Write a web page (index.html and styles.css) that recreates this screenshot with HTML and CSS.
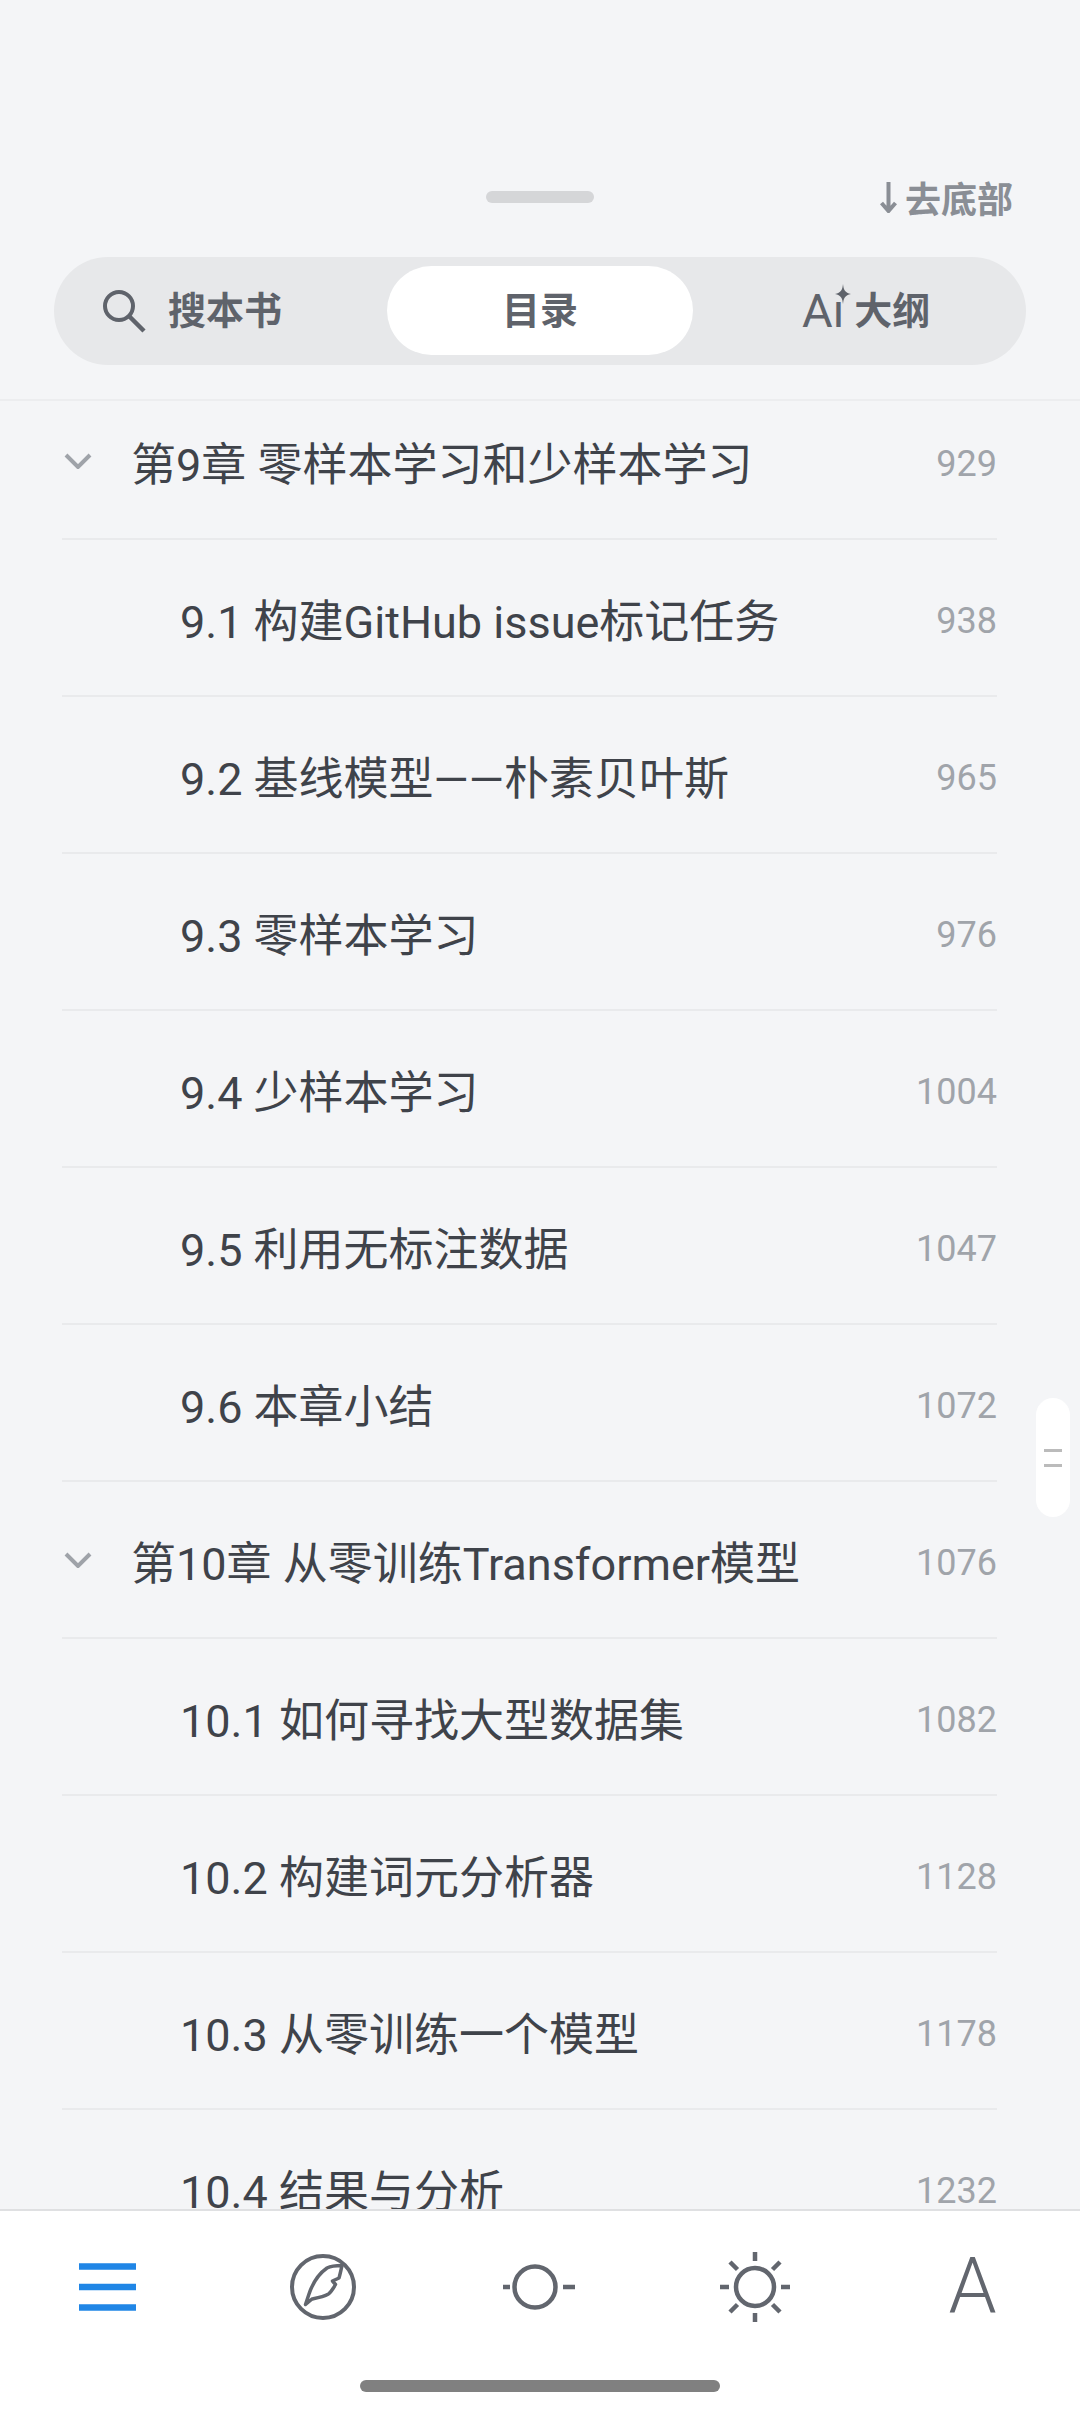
FILE: index.html
```html
<!DOCTYPE html>
<html lang="zh-CN">
  <head>
    <meta charset="UTF-8" />
    <meta name="viewport" content="width=device-width, initial-scale=1.0" />
    <title>目录</title>
    <link rel="stylesheet" href="styles.css">
  </head>
  <body>
    <div class="sheet">
      <div class="head">
        <div class="top_row">
          <span></span>
          <span class="grip"></span>
          <a class="to_bottom">
            <svg class="down_icon" width="17" height="32" viewBox="0 0 17 32"><path d="M8.500 1v29M1.500 22l7 8 7-8" fill="none" stroke="#8a8e95" stroke-width="4"/></svg>
            <span>去底部</span>
          </a>
        </div>
        <div class="tabs">
          <div class="tab tab_search">
            <svg width="44" height="44" viewBox="0 0 44 44"><circle cx="17" cy="17" r="14" fill="none" stroke="#5f636b" stroke-width="4"/><path d="M27 27l15 15" stroke="#5f636b" stroke-width="4.500"/></svg>
            <span class="tab_text">搜本书</span>
          </div>
          <div class="tab tab_active"><span class="tab_text">目录</span></div>
          <div class="tab tab_outline">
            <span class="ai_mark">Aı<svg class="spark" width="16" height="20" viewBox="0 0 16 20"><path d="M8 0c.6 6 2 8.500 8 10-6 1.500-7.400 4-8 10-.6-6-2-8.500-8-10 6-1.500 7.400-4 8-10z" fill="#5f636b"/></svg></span>
            <span class="tab_text">大纲</span>
          </div>
        </div>
      </div>

      <div class="list">
        <div class="list_inner">
          <div class="row chapter">
            <svg class="chevron" width="28" height="16" viewBox="0 0 28 16"><path d="M2 2l12 12L26 2" fill="none" stroke="#9fa3a9" stroke-width="4"/></svg>
            <span class="title">第9章 零样本学习和少样本学习</span><span class="page">929</span>
          </div>
          <div class="row section"><span class="title">9.1 构建GitHub issue标记任务</span><span class="page">938</span></div>
          <div class="row section"><span class="title">9.2 基线模型——朴素贝叶斯</span><span class="page">965</span></div>
          <div class="row section"><span class="title">9.3 零样本学习</span><span class="page">976</span></div>
          <div class="row section"><span class="title">9.4 少样本学习</span><span class="page">1004</span></div>
          <div class="row section"><span class="title">9.5 利用无标注数据</span><span class="page">1047</span></div>
          <div class="row section"><span class="title">9.6 本章小结</span><span class="page">1072</span></div>
          <div class="row chapter">
            <svg class="chevron" width="28" height="16" viewBox="0 0 28 16"><path d="M2 2l12 12L26 2" fill="none" stroke="#9fa3a9" stroke-width="4"/></svg>
            <span class="title">第10章 从零训练Transformer模型</span><span class="page">1076</span>
          </div>
          <div class="row section"><span class="title">10.1 如何寻找大型数据集</span><span class="page">1082</span></div>
          <div class="row section"><span class="title">10.2 构建词元分析器</span><span class="page">1128</span></div>
          <div class="row section"><span class="title">10.3 从零训练一个模型</span><span class="page">1178</span></div>
          <div class="row section"><span class="title">10.4 结果与分析</span><span class="page">1232</span></div>
        </div>
      </div>

      <div class="toolbar">
        <div class="tools">
          <div class="tool">
            <svg width="57" height="48" viewBox="0 0 57 48"><path d="M0 3.500h57M0 24h57M0 44.500h57" stroke="#2086e6" stroke-width="6.500"/></svg>
          </div>
          <div class="tool">
            <svg width="68" height="68" viewBox="0 0 68 68"><circle cx="34" cy="34" r="31" fill="none" stroke="#62666e" stroke-width="4"/><path d="M16.500 51.500L20 41C23 32 28 22 38 15C43 12.500 48 12.500 53 12.500C52 17 51 22 50 25L43.500 28L46.500 31.500C44 36 42 39 39.500 41C34 44 28 45 23 46Z" fill="none" stroke="#62666e" stroke-width="3.500" stroke-linejoin="round"/></svg>
          </div>
          <div class="tool">
            <svg width="72" height="48" viewBox="0 0 72 48"><circle cx="32" cy="24" r="20.500" fill="none" stroke="#62666e" stroke-width="4.500"/><path d="M0 24h7M60 24h12" stroke="#62666e" stroke-width="4.500"/></svg>
          </div>
          <div class="tool">
            <svg width="70" height="70" viewBox="0 0 70 70"><circle cx="35" cy="35" r="19" fill="none" stroke="#62666e" stroke-width="4.500"/><path d="M35 0v9M35 61v9M0 35h9M61 35h9M10 10l7.500 7.500M60 10l-7.500 7.500M10 60l7.500-7.500M60 60l-7.500-7.500" stroke="#62666e" stroke-width="4.500"/></svg>
          </div>
          <div class="tool tool_font">A</div>
        </div>
        <div class="home_bar"></div>
      </div>

      <div class="scroll_handle"><i></i><i></i></div>
    </div>
  </body>
</html>
```

FILE: styles.css
```css
* {
  box-sizing: border-box;
}
html,
body {
  margin: 0px;
  padding: 0px;
}
body {
  font-family: Roboto, "Noto Sans CJK SC", sans-serif;
  background-color: #f4f5f7;
}
.sheet {
  position: relative;
  width: 1080px;
  height: 2412px;
  display: flex;
  flex-direction: column;
  overflow: hidden;
}

/* top part */
.head {
  height: 401px;
  padding: 176px 54px 0px;
  border-bottom: 2px solid #ecedef;
  flex-shrink: 0;
}
.top_row {
  display: grid;
  grid-template-columns: 1fr 108px 1fr;
  align-items: center;
  height: 42px;
}
.grip {
  height: 12px;
  border-radius: 6px;
  background-color: #d5d6d8;
}
.to_bottom {
  display: flex;
  justify-content: flex-end;
  align-items: center;
  gap: 8px;
  height: 32px;
  padding-right: 13px;
  color: #8a8e95;
  font-size: 36px;
  font-weight: 700;
}
.tabs {
  display: grid;
  grid-template-columns: 1fr 306px 1fr;
  height: 108px;
  margin-top: 39px;
  padding: 9px 10px 10px;
  border-radius: 54px;
  background-color: #e7e8ea;
}
.tab {
  display: flex;
  align-items: center;
  color: #5f636b;
  font-size: 38px;
  font-weight: 700;
  border-radius: 45px;
}
.tab_text {
  margin-bottom: 7px;
}
.tab_search {
  gap: 22px;
  padding-left: 38px;
}
.tab_active {
  justify-content: center;
  background-color: white;
}
.tab_outline {
  gap: 10px;
  padding-left: 109px;
}
.ai_mark {
  position: relative;
  font-size: 47px;
  font-weight: 400;
  line-height: 1;
}
.spark {
  position: absolute;
  top: -3px;
  right: -7px;
}

/* list */
.list {
  flex: 1;
  overflow: hidden;
}
.list_inner {
  margin-top: -18px;
  padding: 0px 83px 0px 62px;
}
.row {
  display: flex;
  align-items: center;
  height: 157px;
  padding-top: 1px;
  border-bottom: 2px solid #e9eaec;
  color: #3f434a;
  font-size: 45px;
}
.section {
  padding-left: 118px;
}
.chevron {
  flex-shrink: 0;
  margin-left: 2px;
  margin-right: 39px;
}
.title {
  flex: 1;
  white-space: nowrap;
}
.page {
  margin-top: 6px;
  color: #a0a4aa;
  font-size: 36px;
  line-height: 1;
}

/* bottom toolbar */
.toolbar {
  height: 203px;
  flex-shrink: 0;
  border-top: 2px solid #dfe0e2;
  background-color: white;
}
.tools {
  display: flex;
  align-items: center;
  height: 152px;
  margin-left: -1px;
}
.tool {
  display: flex;
  justify-content: center;
  align-items: center;
  width: 216px;
}
.tool_font {
  padding-left: 3px;
  color: #62666e;
  font-size: 77px;
  font-weight: 300;
  line-height: 1;
}
.home_bar {
  width: 360px;
  height: 12px;
  margin: 17px auto 0px;
  border-radius: 6px;
  background-color: #808080;
}

/* fast scroll thumb over the list */
.scroll_handle {
  position: absolute;
  top: 1398px;
  left: 1036px;
  width: 34px;
  height: 119px;
  display: flex;
  flex-direction: column;
  justify-content: center;
  align-items: center;
  gap: 12px;
  border-radius: 17px;
  background-color: white;
}
.scroll_handle i {
  display: block;
  width: 18px;
  height: 3px;
  background-color: #bbbbbb;
}
```
